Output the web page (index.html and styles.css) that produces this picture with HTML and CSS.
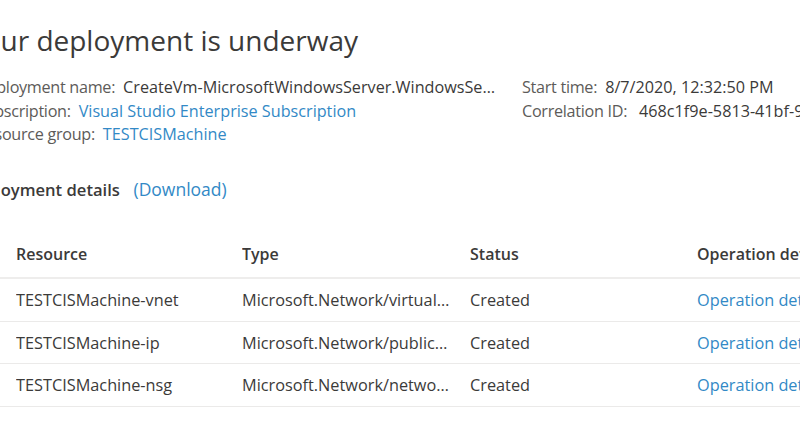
FILE: index.html
```html
<!DOCTYPE html>
<html>
<head>
<meta charset="utf-8">
<link rel="stylesheet" href="styles.css">
</head>
<body>
<div class="page">
  <h1 class="title">Your deployment is underway</h1>
  <div class="meta">
    <div class="meta-col meta-left">
      <div class="meta-row"><span class="label">Deployment name:</span><span class="value trunc">CreateVm-MicrosoftWindowsServer.WindowsServer-201-20200807123250</span></div>
      <div class="meta-row"><span class="label">Subscription:</span><a class="link">Visual Studio Enterprise Subscription</a></div>
      <div class="meta-row"><span class="label">Resource group:</span><a class="link">TESTCISMachine</a></div>
    </div>
    <div class="meta-col meta-right">
      <div class="meta-row"><span class="label">Start time:</span><span class="value">8/7/2020, 12:32:50 PM</span></div>
      <div class="meta-row"><span class="label">Correlation ID:</span><span class="value">468c1f9e-5813-41bf-9b2e-8c4f1a7d2e63</span></div>
    </div>
  </div>
  <div class="details">
    <span class="details-title">Deployment details</span>
    <a class="link">(Download)</a>
  </div>
  <div class="table">
    <div class="row head">
      <div class="cell icon"></div>
      <div class="cell">Resource</div>
      <div class="cell">Type</div>
      <div class="cell">Status</div>
      <div class="cell">Operation details</div>
    </div>
    <div class="row">
      <div class="cell icon"></div>
      <div class="cell">TESTCISMachine-vnet</div>
      <div class="cell trunc">Microsoft.Network/virtualNetworks</div>
      <div class="cell">Created</div>
      <div class="cell"><a class="link">Operation details</a></div>
    </div>
    <div class="row">
      <div class="cell icon"></div>
      <div class="cell">TESTCISMachine-ip</div>
      <div class="cell trunc">Microsoft.Network/publicIpAddresses</div>
      <div class="cell">Created</div>
      <div class="cell"><a class="link">Operation details</a></div>
    </div>
    <div class="row">
      <div class="cell icon"></div>
      <div class="cell">TESTCISMachine-nsg</div>
      <div class="cell trunc">Microsoft.Network/networkSecurityGroups</div>
      <div class="cell">Created</div>
      <div class="cell"><a class="link">Operation details</a></div>
    </div>
  </div>
</div>
</body>
</html>
```
FILE: styles.css
```css
html, body {
  margin: 0;
  padding: 0;
  background: #ffffff;
  overflow: hidden;
}
body {
  width: 800px;
  height: 445px;
  font-family: "Open Sans", "Noto Sans", sans-serif;
  color: #3b3a39;
}
.page {
  margin-left: -24px;
  width: 960px;
}
.title {
  margin: 0 0 0 -8px;
  padding-top: 20px;
  height: 40px;
  font-size: 28px;
  font-weight: 400;
  line-height: 40px;
  color: #3b3a39;
}
.meta {
  display: flex;
  margin-top: 16px;
  font-size: 16.2px;
}
.meta-col {
  display: flex;
  flex-direction: column;
}
.meta-left {
  flex: 0 0 546px;
  width: 546px;
  padding-right: 24px;
  box-sizing: border-box;
}
.meta-right {
  flex: 0 0 auto;
}
.meta-row {
  display: flex;
  height: 23.5px;
  line-height: 23.5px;
  white-space: nowrap;
}
.label {
  color: #5d5b59;
  margin-right: 8px;
  letter-spacing: -0.3px;
  flex: 0 0 auto;
}
.meta-right .meta-row + .meta-row .label {
  margin-right: 12px;
}
.value {
  color: #3b3a39;
}
.trunc {
  overflow: hidden;
  text-overflow: ellipsis;
  white-space: nowrap;
}
.meta-left .trunc {
  flex: 1 1 auto;
  min-width: 0;
}
.link {
  color: #3289c6;
  text-decoration: none;
}
.details {
  margin-top: 30px;
  margin-left: -12px;
  height: 24px;
  line-height: 24px;
  font-size: 17.5px;
}
.details-title {
  font-weight: 600;
  font-size: 16.6px;
  margin-right: 9px;
}
.table {
  margin-top: 35.5px;
  font-size: 16.3px;
}
.row {
  display: grid;
  grid-template-columns: 40px 226px 228px 227px 1fr;
  height: 41.5px;
  align-items: center;
  border-bottom: 1px solid #ebeae9;
}
.row.head {
  font-weight: 600;
  font-size: 16px;
  height: 43px;
  box-sizing: border-box;
  padding-bottom: 6px;
  border-bottom: 2px solid #eeedec;
}
.cell {
  white-space: nowrap;
  overflow: hidden;
}
.row .cell.trunc {
  text-overflow: ellipsis;
  padding-right: 18px;
}
.row:not(.head) .cell {
  padding-top: 1px;
}
```
